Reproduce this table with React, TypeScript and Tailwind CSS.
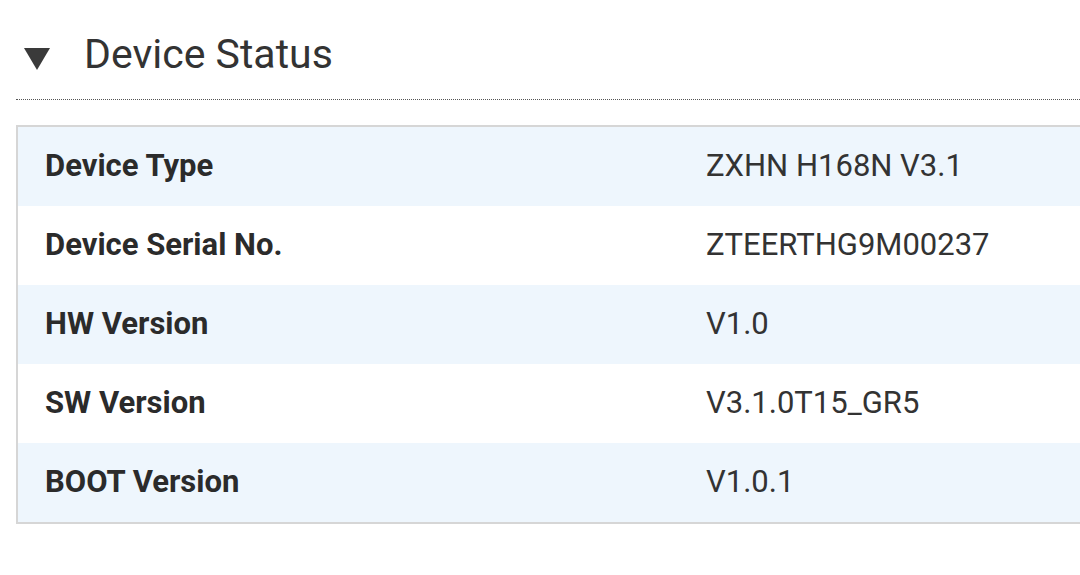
import React from 'react';

interface StatusRow {
    label: string;
    value: string;
}

const rows: StatusRow[] = [
    { label: 'Device Type', value: 'ZXHN H168N V3.1' },
    { label: 'Device Serial No.', value: 'ZTEERTHG9M00237' },
    { label: 'HW Version', value: 'V1.0' },
    { label: 'SW Version', value: 'V3.1.0T15_GR5' },
    { label: 'BOOT Version', value: 'V1.0.1' },
];

export default function App() {
    return (
        <div
            className="w-[1080px] h-[575px] overflow-hidden bg-white text-[#333333]"
            style={{ fontFamily: 'Roboto, "Noto Sans", sans-serif' }}
        >
            <div className="pl-4 pt-[28px]">
                {/* section header */}
                <div className="flex items-center h-[52px]">
                    <svg width="26" height="22" viewBox="0 0 26 22" className="ml-[8px] mt-[10px]">
                        <polygon points="0,0 26,0 13,22" fill="#3a3a3a" />
                    </svg>
                    <h2 className="ml-[34px] text-[41px] leading-none font-normal text-[#333333]">Device Status</h2>
                </div>
                <div className="mt-[19px] border-t border-dotted border-[#555555]" />

                {/* status table */}
                <div className="mt-[25px] w-[1100px] border-t-2 border-l-2 border-b-2 border-[#d6d6d6]">
                    {rows.map((row, i) => (
                        <div
                            key={row.label}
                            className={
                                'flex items-center h-[79px] ' + (i % 2 === 0 ? 'bg-[#eef6fd]' : 'bg-white')
                            }
                        >
                            <div className="w-[688px] pl-[27px] text-[31px] font-bold text-[#2b2b2b]">{row.label}</div>
                            <div className="text-[31px] text-[#333333]">{row.value}</div>
                        </div>
                    ))}
                </div>
            </div>
        </div>
    );
}
